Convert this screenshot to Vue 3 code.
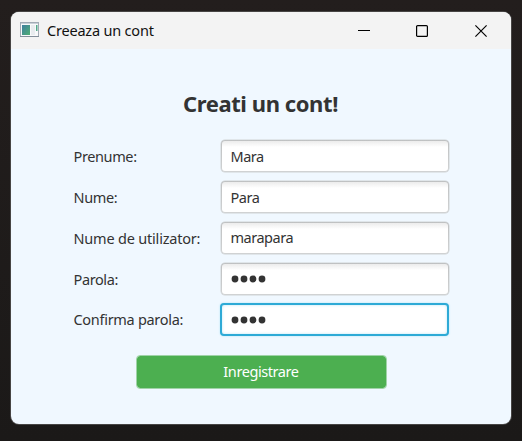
<script setup>
const fields = [
  { id: 'prenume', label: 'Prenume:', value: 'Mara' },
  { id: 'nume', label: 'Nume:', value: 'Para' },
  { id: 'utilizator', label: 'Nume de utilizator:', value: 'marapara' },
  { id: 'parola', label: 'Parola:', dots: 4 },
  { id: 'confirma', label: 'Confirma parola:', dots: 4, focused: true },
]
</script>

<template>
  <div class="desktop">
    <main class="window">
      <header class="titlebar">
        <svg class="app-icon" width="19" height="16" viewBox="0 0 19 16">
          <defs>
            <linearGradient id="pane" x1="0" y1="0" x2="1" y2="1">
              <stop offset="0" stop-color="#3f7f9f" />
              <stop offset="1" stop-color="#4fae73" />
            </linearGradient>
          </defs>
          <rect x=".5" y=".5" width="18" height="14" fill="#f8f9fa" stroke="#a3abb5" />
          <path d="M1 1.5h17" stroke="#c9d0d8" />
          <path d="M0 14.5h19" stroke="#848f9a" />
          <rect x="2" y="3" width="8" height="10" fill="url(#pane)" />
          <rect x="11" y="3" width="4" height="10" fill="#e9ecef" />
          <rect x="16" y="3" width="1.5" height="6" fill="#54a98a" />
        </svg>
        <span class="caption">Creeaza un cont</span>
        <div class="controls">
          <svg width="12" height="12" viewBox="0 0 12 12"><path d="M0 5.5h12" stroke="#000" /></svg>
          <svg width="12" height="12" viewBox="0 0 12 12"><rect x=".6" y=".6" width="10.8" height="10.8" rx="1" fill="none" stroke="#000" stroke-width="1.2" /></svg>
          <svg width="12" height="12" viewBox="0 0 12 12"><path d="M.4.4l11.2 11.2M11.6.4L.4 11.6" stroke="#000" stroke-width="1.15" /></svg>
        </div>
      </header>
      <section class="content">
        <h1>Creati un cont!</h1>
        <div class="form">
          <div v-for="f in fields" :key="f.id" class="row">
            <span class="label" :class="f.id">{{ f.label }}</span>
            <div class="field" :class="{ focused: f.focused }">
              <span v-if="f.value">{{ f.value }}</span>
              <svg v-else class="dots" width="38" height="8" viewBox="0 0 38 8">
                <circle v-for="n in f.dots" :key="n" :cx="n * 9 - 5" cy="4" r="3.4" fill="#333" />
              </svg>
            </div>
          </div>
        </div>
        <button class="submit">Inregistrare</button>
      </section>
    </main>
  </div>
</template>

<style>
body { margin: 0; background: #1f1c1b; }
</style>

<style scoped>
.desktop {
  box-sizing: border-box;
  width: 522px;
  height: 441px;
  padding: 12px 11px 17px;
  background: linear-gradient(#231e1d, #1b1918);
  font-family: "Noto Sans", "Open Sans", sans-serif;
  font-size: 14.5px;
  color: #333;
}
.window {
  display: flex;
  flex-direction: column;
  height: 412px;
  border-radius: 8px;
  overflow: hidden;
  background: #f0f8ff;
  box-shadow: 0 0 0 1px #474544;
}
.titlebar {
  display: flex;
  align-items: center;
  height: 37px;
  flex: none;
  padding: 0 24px 0 9px;
  background: #f3f3f3;
  box-sizing: border-box;
}
.app-icon { margin-bottom: 1px; }
.caption {
  margin: 0 0 2px 8px;
  color: #111;
  white-space: nowrap;
  letter-spacing: -0.2px;
}
.controls { display: flex; gap: 47px; margin-left: auto; }
.controls svg:first-child { margin-right: -1px; }
.content {
  display: flex;
  flex-direction: column;
  align-items: center;
}
h1 {
  margin: 38px 0 0;
  height: 32px;
  line-height: 32px;
  font-size: 22px;
  font-weight: 700;
  letter-spacing: -0.42px;
  white-space: nowrap;
  padding-right: 1px;
}
.form {
  display: grid;
  gap: 8.75px;
  width: 375px;
  margin-top: 21.4px;
}
.row { display: grid; grid-template-columns: 147px 228px; height: 32px; }
.label { line-height: 32px; white-space: nowrap; letter-spacing: -0.38px; }
.label.utilizator { letter-spacing: -0.2px; }
.label.confirma { letter-spacing: -0.3px; }
.field {
  box-sizing: border-box;
  display: flex;
  align-items: center;
  height: 32px;
  padding: 0 0 1px 9px;
  border: 1px solid transparent;
  border-radius: 4px;
  background:
    linear-gradient(#ececec, #fff 6px) padding-box,
    linear-gradient(#bfc1c2, #d0d2d3) border-box;
  box-shadow: 0 0 0 0.5px #d0d3d5;
  letter-spacing: -0.48px;
}
.field.focused {
  margin: 0 0 -1px -1px;
  height: 33px;
  border: 2px solid #2eaad6;
  background: #fff;
  box-shadow: 0 0 2px #a9dff3, inset 0 0 3px #b9e6f5;
}
.dots { margin-top: 2px; }
.submit {
  width: 251px;
  height: 34px;
  margin: 19.6px 0 0;
  padding: 0;
  border: 1px solid #a0d3a8;
  border-radius: 4px;
  background: #4caf50;
  background-clip: padding-box;
  color: #fff;
  font: inherit;
  line-height: 31px;
  letter-spacing: -0.42px;
}
</style>
